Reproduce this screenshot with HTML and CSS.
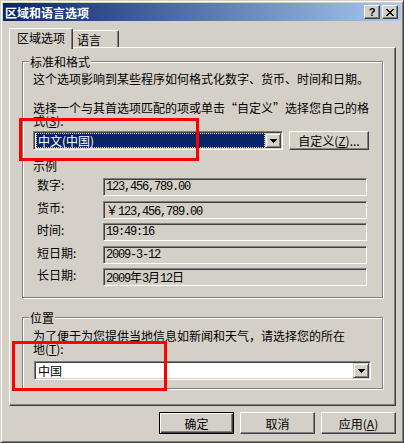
FILE: index.html
```html
<!DOCTYPE html>
<html lang="zh-CN">

<head>
    <meta charset="UTF-8">
    <meta name="viewport" content="width=device-width, initial-scale=1.0">
    <title>区域和语言选项</title>
    <link rel="stylesheet" href="styles.css">
</head>

<body>
    <div class="window">
        <div class="titlebar">
            <span class="title">区域和语言选项</span>
            <div class="title-buttons">
                <span class="tbtn">?</span>
                <span class="tbtn">
                    <svg width="8" height="7" viewBox="0 0 8 7" shape-rendering="crispEdges">
                        <path d="M0 0h2v1h1v1h2v-1h1v-1h2v1h-1v1h-1v1h-1v1h1v1h1v1h1v1h-2v-1h-1v-1h-2v1h-1v1h-2v-1h1v-1h1v-1h1v-1h-1v-1h-1v-1h-1z" fill="#000"/>
                    </svg>
                </span>
            </div>
        </div>

        <div class="client">
            <div class="tabs">
                <div class="tab tab-active">区域选项</div>
                <div class="tab">语言</div>
            </div>

            <div class="panel">
                <fieldset class="group group-format">
                    <legend>标准和格式</legend>
                    <p class="intro">这个选项影响到某些程序如何格式化数字、货币、时间和日期。</p>
                    <p class="hint">选择一个与其首选项匹配的项或单击“自定义”选择您自己的格<br>式(<u>S</u>):</p>

                    <div class="combo-row">
                        <div class="combo combo-format">
                            <span class="combo-value selected"><span class="focus">中文(中国)</span></span>
                            <span class="combo-drop">
                                <svg width="7" height="4" viewBox="0 0 7 4" shape-rendering="crispEdges">
                                    <path d="M0 0h7v1h-1v1h-1v1h-1v1h-1v-1h-1v-1h-1v-1h-1z" fill="#000"/>
                                </svg>
                            </span>
                        </div>
                        <button class="btn btn-custom">自定义(<u>Z</u>)...</button>
                    </div>

                    <div class="sample-title">示例</div>
                    <div class="samples">
                        <span class="sample-label">数字:</span>
                        <span class="sample-field">123,456,789.00</span>
                        <span class="sample-label">货币:</span>
                        <span class="sample-field"><span class="cjk">￥</span>123,456,789.00</span>
                        <span class="sample-label">时间:</span>
                        <span class="sample-field">19:49:16</span>
                        <span class="sample-label">短日期:</span>
                        <span class="sample-field">2009-3-12</span>
                        <span class="sample-label">长日期:</span>
                        <span class="sample-field">2009<span class="cjk">年</span>3<span class="cjk">月</span>12<span class="cjk">日</span></span>
                    </div>
                </fieldset>

                <fieldset class="group group-location">
                    <legend>位置</legend>
                    <p class="hint">为了便于为您提供当地信息如新闻和天气，请选择您的所在<br>地(<u>T</u>):</p>
                    <div class="combo combo-location">
                        <span class="combo-value">中国</span>
                        <span class="combo-drop">
                            <svg width="7" height="4" viewBox="0 0 7 4" shape-rendering="crispEdges">
                                <path d="M0 0h7v1h-1v1h-1v1h-1v1h-1v-1h-1v-1h-1v-1h-1z" fill="#000"/>
                            </svg>
                        </span>
                    </div>
                </fieldset>
            </div>

            <div class="actions">
                <button class="btn btn-default">确定</button>
                <button class="btn">取消</button>
                <button class="btn">应用(<u>A</u>)</button>
            </div>
        </div>

        <!-- red highlight marks -->
        <div class="mark mark-format"></div>
        <div class="mark mark-location"></div>
    </div>
</body>

</html>
```

FILE: styles.css
```css
:root {
    --face: #d4d0c8;
    --shadow: #808080;
    --dark: #404040;
    --light: #ffffff;
    --caption: #0a246a;
    --caption-end: #a6caf0;
}

body {
    margin: 0;
    background: var(--face);
    font-family: "Noto Sans CJK SC", "Noto Sans", sans-serif;
    font-size: 12px;
    line-height: 13px;
    color: #000;
}

.window {
    position: relative;
    width: 404px;
    height: 443px;
    box-sizing: border-box;
    padding: 2px;
    border: 1px solid;
    border-color: var(--face) var(--dark) var(--dark) var(--face);
    box-shadow: inset 1px 1px var(--light), inset -1px -1px var(--shadow);
    display: flex;
    flex-direction: column;
}

/* title bar */
.titlebar {
    height: 18px;
    display: flex;
    align-items: center;
    justify-content: space-between;
    padding: 0 3px 0 2px;
    background: linear-gradient(to right, var(--caption), var(--caption-end));
}

.title {
    color: #fff;
    font-weight: bold;
}

.title-buttons {
    display: flex;
    gap: 2px;
}

.tbtn {
    width: 16px;
    height: 14px;
    box-sizing: border-box;
    display: flex;
    align-items: center;
    justify-content: center;
    background: var(--face);
    border: 1px solid;
    border-color: var(--light) var(--dark) var(--dark) var(--light);
    box-shadow: inset -1px -1px var(--shadow);
    font-family: "Liberation Sans", sans-serif;
    font-weight: bold;
    font-size: 11px;
    line-height: 11px;
}

/* dialog body */
.client {
    flex: 1;
    padding: 7px 5px 0 6px;
}

.tabs {
    display: flex;
    align-items: flex-end;
}

.tab {
    box-sizing: border-box;
    height: 17px;
    width: 47px;
    margin-left: -1px;
    padding: 2px 0 0 4px;
    background: var(--face);
    border: 1px solid;
    border-color: var(--light) var(--dark) transparent var(--light);
    border-bottom: none;
    border-radius: 2px 2px 0 0;
    box-shadow: inset -1px 0 var(--shadow);
}

.tab-active {
    position: relative;
    z-index: 1;
    width: 64px;
    height: 21px;
    margin-left: 0;
    margin-bottom: -2px;
    padding-left: 7px;
}

.panel {
    box-sizing: border-box;
    height: 359px;
    padding: 7px 12px 0 12px;
    border: 1px solid;
    border-color: var(--light) var(--dark) var(--dark) var(--light);
    box-shadow: inset -1px -1px var(--shadow);
}

/* group boxes */
.group {
    margin: 0;
    min-width: 0;
    padding: 4px 10px 11px 10px;
    border: 1px solid var(--shadow);
    box-shadow: 1px 1px 0 var(--light), inset 1px 1px 0 var(--light);
}

.group legend {
    margin-left: -4px;
    padding: 0 1px;
    background: var(--face);
}

.group-location {
    margin-top: 13px;
    padding-top: 5px;
    padding-bottom: 8px;
}

p {
    margin: 0;
}

.hint {
    margin-top: 16px;
}

.group-location .hint {
    margin-top: 0;
}

/* combo boxes */
.combo-row {
    display: flex;
    gap: 6px;
    margin-top: 4px;
}

.combo {
    box-sizing: border-box;
    height: 19px;
    display: flex;
    background: #fff;
    border: 1px solid;
    border-color: var(--shadow) var(--light) var(--light) var(--shadow);
    box-shadow: inset 1px 1px var(--dark), inset -1px -1px var(--face);
    padding: 1px;
}

.combo-format {
    width: 250px;
}

.combo-location {
    width: 337px;
    margin: 6px 0 0 1px;
}

.combo-value {
    flex: 1;
    padding: 1px 0 0 2px;
}

.combo-value.selected {
    padding: 0;
    margin-left: 1px;
    display: flex;
    background: var(--caption);
    color: #fff;
}

.focus {
    flex: 1;
    padding: 0 0 0 1px;
    border: 1px dotted #e8d890;
}

.combo-drop {
    width: 16px;
    box-sizing: border-box;
    display: flex;
    align-items: center;
    justify-content: center;
    background: var(--face);
    border: 1px solid;
    border-color: var(--face) var(--dark) var(--dark) var(--face);
    box-shadow: inset 1px 1px var(--light), inset -1px -1px var(--shadow);
}

/* buttons */
.btn {
    box-sizing: border-box;
    width: 75px;
    height: 22px;
    padding: 0;
    font: inherit;
    color: #000;
    background: var(--face);
    border: 1px solid;
    border-color: var(--light) var(--dark) var(--dark) var(--light);
    box-shadow: inset -1px -1px var(--shadow);
}

.btn-custom {
    width: 80px;
    height: 19px;
}

.btn-default {
    border-color: #000;
    box-shadow: inset 1px 1px var(--light), inset -1px -1px var(--dark), inset -2px -2px var(--shadow);
}

u {
    text-decoration-thickness: 1px;
    text-underline-offset: 1px;
}

/* sample fields */
.sample-title {
    margin-top: 9px;
}

.samples {
    display: grid;
    grid-template-columns: 66px 264px;
    grid-auto-rows: 18px;
    row-gap: 4.5px;
    margin: 6px 0 0 4px;
}

.sample-field {
    box-sizing: border-box;
    padding: 1px 0 0 2px;
    border: 1px solid;
    border-color: var(--shadow) var(--light) var(--light) var(--shadow);
    box-shadow: inset 1px 1px var(--dark), inset -1px -1px var(--face);
    font-family: "Liberation Mono", monospace;
    letter-spacing: -1.2px;
    line-height: 14px;
    white-space: nowrap;
}

.cjk {
    font-family: "Noto Sans CJK SC", sans-serif;
    letter-spacing: 0;
}

.actions {
    display: flex;
    justify-content: flex-end;
    gap: 6px;
    margin-top: 6px;
}

/* red highlight rectangles drawn over the dialog */
.mark {
    position: absolute;
    z-index: 5;
    box-sizing: border-box;
    border: 3px solid #ff0000;
}

.mark-format {
    left: 18px;
    top: 117px;
    width: 180px;
    height: 43px;
}

.mark-location {
    left: 11px;
    top: 340px;
    width: 155px;
    height: 50px;
}
```
